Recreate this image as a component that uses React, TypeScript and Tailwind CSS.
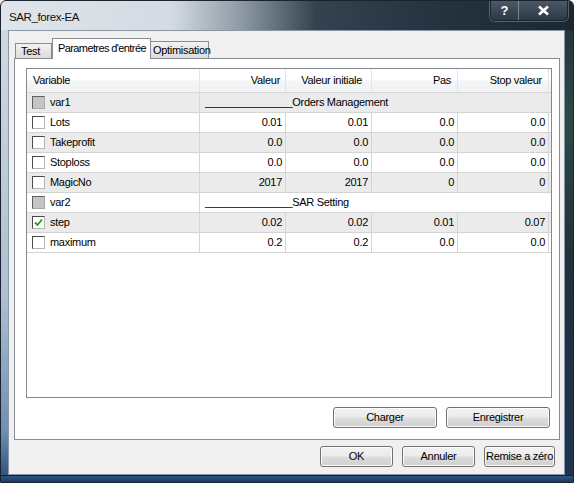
import React from 'react';

type Row = {
  name: string;
  kind: 'group' | 'param';
  checked?: boolean;
  label?: string;
  values?: string[];
};

const rows: Row[] = [
  { name: 'var1', kind: 'group', label: 'Orders Management' },
  { name: 'Lots', kind: 'param', values: ['0.01', '0.01', '0.0', '0.0'] },
  { name: 'Takeprofit', kind: 'param', values: ['0.0', '0.0', '0.0', '0.0'] },
  { name: 'Stoploss', kind: 'param', values: ['0.0', '0.0', '0.0', '0.0'] },
  { name: 'MagicNo', kind: 'param', values: ['2017', '2017', '0', '0'] },
  { name: 'var2', kind: 'group', label: 'SAR Setting' },
  { name: 'step', kind: 'param', checked: true, values: ['0.02', '0.02', '0.01', '0.07'] },
  { name: 'maximum', kind: 'param', values: ['0.2', '0.2', '0.0', '0.0'] },
];

const cols = ['w-[86px]', 'w-[86px]', 'w-[86px]', 'w-[91px]'];

const CheckBox = ({ kind, checked }: { kind: Row['kind']; checked?: boolean }) => {
  if (kind === 'group') {
    return (
      <div className="w-[13px] h-[13px] border border-[#5f5f5f] border-r-[#a8a8a8] border-b-[#a8a8a8] bg-[#c4c4c4]" />
    );
  }
  return (
    <div className="w-[13px] h-[13px] border border-[#4a4a4a] border-r-[#b5b5b5] border-b-[#b5b5b5] bg-white flex items-center justify-center">
      {checked && (
        <svg width="9" height="9" viewBox="0 0 9 9">
          <path d="M1 4.5 L3.5 7 L8 1.5" fill="none" stroke="#1f9a1f" strokeWidth="1.8" />
        </svg>
      )}
    </div>
  );
};

const Button = ({ label, w }: { label: string; w: string }) => (
  <button
    className={`${w} h-[21px] rounded-[3px] border border-[#707070] bg-[linear-gradient(#f2f2f2_0%,#ebebeb_48%,#dddddd_52%,#cfcfcf_100%)] text-[11px] tracking-[-0.3px] text-black flex items-center justify-center whitespace-nowrap shadow-[inset_0_0_0_1px_#fcfcfc]`}
  >
    {label}
  </button>
);

export default function App() {
  return (
    <div
      className="w-[574px] h-[483px] flex flex-col overflow-hidden rounded-t-[6px] border border-[#1a2430] bg-[linear-gradient(90deg,#dfe5ea_0%,#d3dae1_30%,#8d9aa5_42%,#34434f_55%,#243440_75%,#1b2832_100%)] text-black"
      style={{ fontFamily: '"Liberation Sans", Arial, sans-serif' }}
    >
      {/* title bar */}
      <div className="h-[29px] flex items-start justify-between">
        <div className="pl-[8px] pt-[8px] text-[11.5px] tracking-[-0.4px] text-[#111] whitespace-nowrap">SAR_forex-EA</div>
        <div className="flex mr-[5px] border border-t-0 border-[#1c252d] rounded-b-[5px] shadow-[0_0_0_1px_rgba(255,255,255,0.25)]">
          <div className="w-[28px] h-[19px] rounded-bl-[4px] border-r border-[rgba(255,255,255,0.35)] bg-[linear-gradient(#4a5965,#2b3944)] flex items-center justify-center text-white font-bold text-[13px]">
            ?
          </div>
          <div className="w-[48px] h-[19px] rounded-br-[4px] bg-[linear-gradient(#4a5965,#2b3944)] flex items-center justify-center">
            <svg width="13" height="11" viewBox="0 0 13 11">
              <path d="M2 1.5 L11 9.5 M11 1.5 L2 9.5" stroke="#fff" strokeWidth="2.6" />
            </svg>
          </div>
        </div>
      </div>

      <div className="flex flex-1">
        <div className="w-[7px] bg-[linear-gradient(#cfd8e0,#aebfd0_60%,#6f8fb3_90%,#32557e)]" />
        {/* client area */}
        <div className="w-[557px] h-[445px] bg-[#f0f0f0] border border-[#8796a5] flex flex-col">
          {/* tabs */}
          <div className="h-[27px] flex items-end pl-[6px] whitespace-nowrap text-[11px] tracking-[-0.3px]">
            <div className="w-[37px] h-[15px] border border-b-0 border-[#898c95] bg-[linear-gradient(#f2f2f2,#dcdcdc)] pl-[5px] leading-[15px]">
              Test
            </div>
            <div className="relative z-10 -mb-px w-[99px] h-[21px] border border-b-0 border-[#898c95] bg-white pl-[5px] pt-px tracking-[-0.6px]">
              Parametres d'entrée
            </div>
            <div className="w-[58px] h-[17px] border border-b-0 border-l-0 border-[#898c95] bg-[linear-gradient(#f2f2f2,#dcdcdc)] pl-[2px] leading-[17px]">
              Optimisation
            </div>
          </div>

          {/* tab panel */}
          <div className="ml-[5px] w-[546px] h-[382px] border border-[#898c95] bg-white flex flex-col">
            <div className="ml-[11px] mt-[9px] w-[526px] h-[330px] border border-[#828790] bg-white flex flex-col text-[11px] tracking-[-0.3px] whitespace-nowrap">
              {/* header */}
              <div className="h-[24px] flex border-b border-[#d5d5d5] bg-[linear-gradient(#ffffff_0%,#ffffff_45%,#f4f5f7_55%,#f1f2f4_100%)]">
                <div className="w-[173px] border-r border-[#e3e4e6] flex items-center pl-[6px]">Variable</div>
                <div className="w-[86px] border-r border-[#e3e4e6] flex items-center justify-end pr-[5px]">Valeur</div>
                <div className="w-[86px] border-r border-[#e3e4e6] flex items-center justify-end pr-[9px]">Valeur initiale</div>
                <div className="w-[86px] border-r border-[#e3e4e6] flex items-center justify-end pr-[6px]">Pas</div>
                <div className="w-[91px] border-r border-[#e3e4e6] flex items-center justify-end pr-[6px]">Stop valeur</div>
              </div>
              {rows.map((r, i) => (
                <div
                  key={r.name}
                  className={`h-[20px] flex border-b border-[#d4d4d4] ${i % 2 === 0 ? 'bg-[#ebebeb]' : 'bg-white'}`}
                >
                  <div className="w-[173px] border-r border-[#d4d4d4] flex items-center pl-[5px] gap-[5px]">
                    <CheckBox kind={r.kind} checked={r.checked} />
                    <span>{r.name}</span>
                  </div>
                  {r.kind === 'group' ? (
                    <div className="w-[349px] flex items-center pl-[5px] whitespace-pre">
                      {'_______________' + r.label}
                    </div>
                  ) : (
                    r.values!.map((v, j) => (
                      <div
                        key={j}
                        className={`${cols[j]} border-r border-[#d4d4d4] flex items-center justify-end pr-[3px]`}
                      >
                        {v}
                      </div>
                    ))
                  )}
                </div>
              ))}
            </div>

            <div className="mt-[9px] flex justify-end gap-[9px] pr-[9px]">
              <Button label="Charger" w="w-[104px]" />
              <Button label="Enregistrer" w="w-[104px]" />
            </div>
          </div>

          <div className="mt-[6px] flex justify-end gap-[9px] pr-[9px]">
            <Button label="OK" w="w-[73px]" />
            <Button label="Annuler" w="w-[73px]" />
            <Button label="Remise a zéro" w="w-[71px]" />
          </div>
        </div>
        <div className="flex-1 bg-[linear-gradient(#27343f,#2d4a45_20%,#22303a_50%,#1e3350_100%)]" />
      </div>
      <div className="h-[7px] bg-[linear-gradient(#2f5584,#1d3a5e)] border-t border-[#0f1e30]" />
    </div>
  );
}
